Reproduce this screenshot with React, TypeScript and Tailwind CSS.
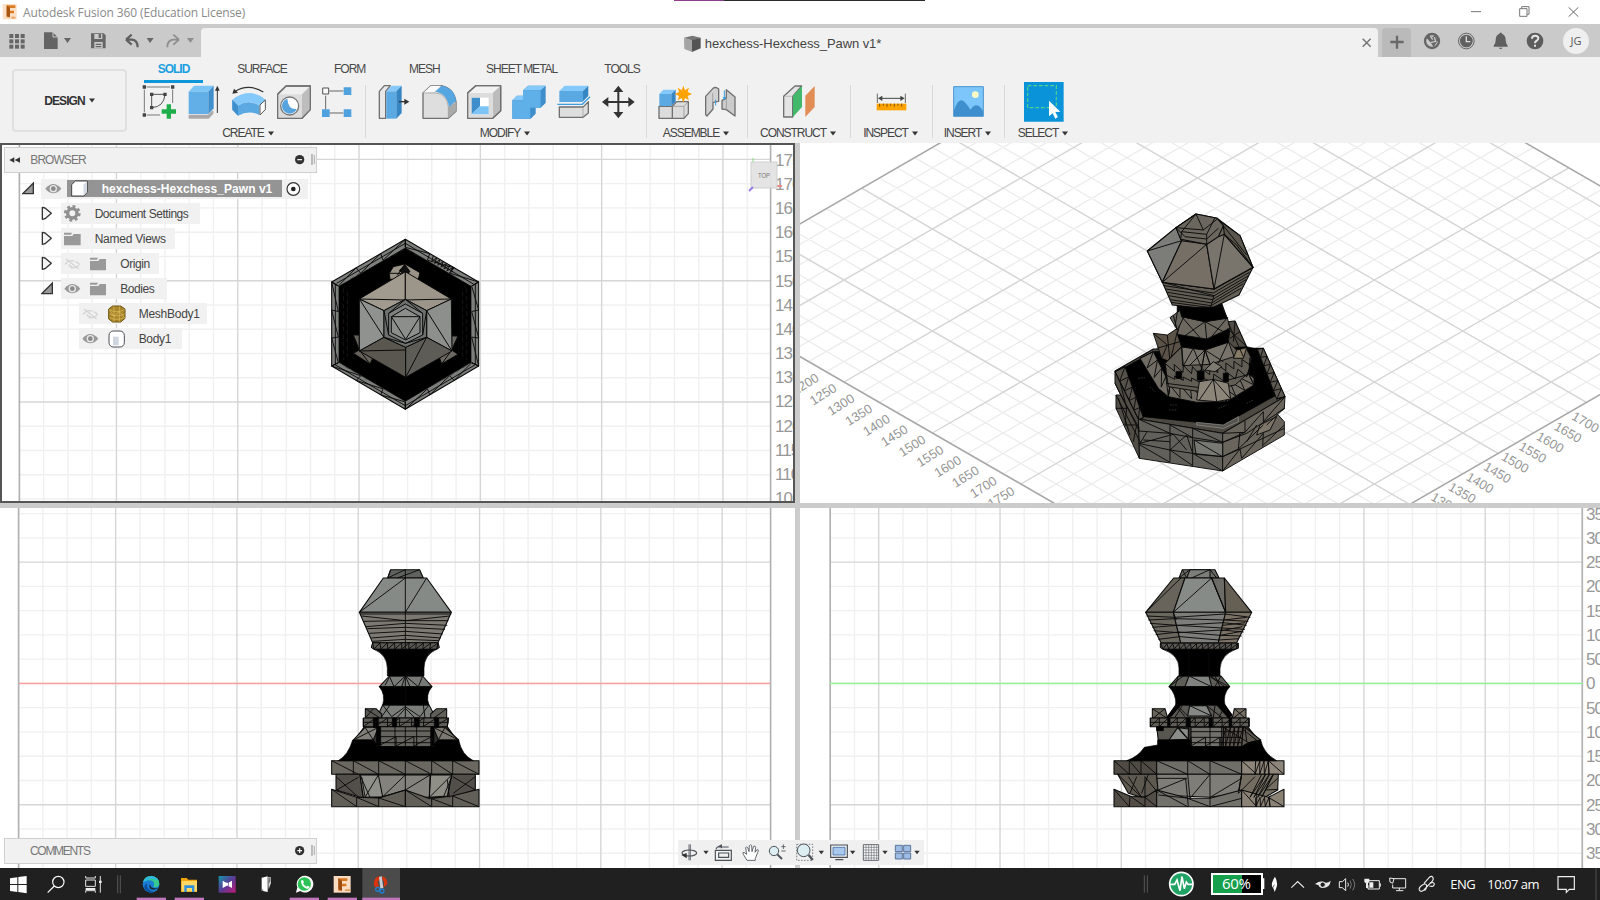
import React from "react";

type Pt = [number, number];
type Face = [string, string];

/* ---------- small helpers ---------- */

function Ico({ x, y, w, h, children, className = "" }: { x: number; y: number; w: number; h: number; children: React.ReactNode; className?: string }) {
  return (
    <svg viewBox={`${x} ${y} ${w} ${h}`} width={w / 3} height={h / 3} className={`block shrink-0 ${className}`} fill="none">
      {children}
    </svg>
  );
}

function zig(a: Pt, b: Pt, c: Pt, d: Pt, n: number): string {
  let s = "";
  for (let i = 0; i <= n; i++) {
    const t = i / n;
    const p = [a[0] + (b[0] - a[0]) * t, a[1] + (b[1] - a[1]) * t];
    const q = [c[0] + (d[0] - c[0]) * t, c[1] + (d[1] - c[1]) * t];
    const u = Math.min(1, (i + 1) / n);
    const r = [a[0] + (b[0] - a[0]) * u, a[1] + (b[1] - a[1]) * u];
    s += `M${p[0]} ${p[1]}L${q[0]} ${q[1]}L${r[0]} ${r[1]}`;
  }
  return s;
}

function Mesh({ x, y, faces, lines, black, top }: { x: number; y: number; faces: Face[]; lines: string; black: string; top?: React.ReactNode }) {
  return (
    <g transform={`translate(${x} ${y}) scale(.33333)`} strokeLinejoin="round">
      {faces.map(([f, p], i) => (
        <polygon key={i} points={p} fill={f} stroke="#0a0a0a" strokeWidth="3.2" />
      ))}
      <path d={black} fill="#000" stroke="#000" strokeWidth="2" />
      <path d={lines} fill="none" stroke="#0a0a0a" strokeWidth="2.8" />
      {top}
    </g>
  );
}

function range(a: number, b: number, step: number) {
  const out: number[] = [];
  for (let v = a; v <= b + 0.01; v += step) out.push(v);
  return out;
}

/* ---------- models ---------- */

const outerHex: Pt[] = [[286, 58], [506, 186], [506, 438], [286, 568], [65, 438], [65, 186]];
const innerHex: Pt[] = [[286, 82], [485, 198], [485, 428], [286, 546], [85, 428], [85, 198]];

function PawnTop() {
  const rim = outerHex.map((p, i) => zig(p, outerHex[(i + 1) % 6], innerHex[i], innerHex[(i + 1) % 6], 3)).join("");
  return (
    <Mesh
      x={310}
      y={220}
      faces={[["#7d7f7c", outerHex.map((p) => p.join(",")).join(" ")]]}
      black="M286 84L483 199V427L286 544L87 427V199Z"
      lines={rim + zig([370, 107], [430, 142], [365, 125], [420, 158], 6) + "M76 192V434M496 192V434M286 70L80 190M286 70L490 192M286 557L75 434M286 557L496 434"}
      top={
        <g stroke="#0a0a0a" strokeWidth="3">
          <g stroke="#2b2b2b" strokeWidth="1.5" strokeDasharray="14 9">
            <path d="M100 205V420M112 215V410M470 205V420M458 215V410M230 118L286 88L345 118M120 178L180 140M400 142L460 176M105 440L170 478M400 480L470 436" fill="none" />
          </g>
          <path d="M238 160L250 140L285 132L330 158L325 178H240Z" fill="#9a9488" />
          <path d="M268 152L285 134L300 155L286 165Z" fill="#111" />
          <path d="M285 132L262 166M238 160H285" />
          <path d="M130 345H148V390L188 415L180 432L130 400Z" fill="#65625b" />
          <path d="M130 345L148 390L130 400M148 390L180 432" />
          <path d="M444 348H425V390L388 412L395 432L444 403Z" fill="#6c6962" />
          <path d="M444 348L425 390L444 403M425 390L395 432" />
          <path d="M148 237L286 155V238L222 272Z" fill="#a09a8f" />
          <path d="M424 237L286 155V238L350 272Z" fill="#9b958a" />
          <path d="M148 237L222 272V352L148 393Z" fill="#8f928e" />
          <path d="M424 237L350 272V352L426 393Z" fill="#8c8f8c" />
          <path d="M148 393L222 352L287 382V472Z" fill="#5a5750" />
          <path d="M426 393L350 352L287 382V472Z" fill="#5e5c57" />
          <path d="M148 237L286 240L424 237M148 237L222 352M350 272L426 393M148 393L287 390M350 352L287 472" fill="none" />
          <path d="M286 238L350 272V352L287 382L222 352V272Z" fill="#6d706d" />
          <path d="M286 252L338 280V345L287 370L236 345V280Z" fill="#7f8280" />
          <path d="M286 265L330 290V338L287 360L244 338V290Z" fill="#8b8e8b" />
          <path d="M244 290H330L287 358ZM222 272L236 345M350 272L338 345M286 238L236 280M286 238L338 280M222 352L287 370L350 352" fill="none" />
        </g>
      }
    />
  );
}

function PawnFront() {
  return (
    <Mesh
      x={310}
      y={560}
      faces={[
        ["#2c2b28", "170,490 405,490 440,540 400,600 170,600 135,540"],
        ["#5f625f", "242,29 329,29 340,54 233,54"],
        ["#868a86", "220,54 350,54 424,157 148,157"],
        ["#7b7971", "148,157 424,157 384,248 188,248"],
        ["#5a5954", "188,248 384,248 388,262 380,268 192,268 184,262"],
        ["#777976", "238,348 338,348 366,380 208,380"],
        ["#7b7d79", "218,435 357,435 378,474 200,474"],
        ["#5b5953", "166,446 198,446 215,462 215,474 166,474"],
        ["#615f59", "410,446 380,446 362,462 362,474 410,474"],
        ["#5d5c56", "160,474 415,474 412,500 160,500"],
        ["#65645e", "205,500 365,500 365,560 205,560"],
        ["#817f79", "165,502 205,502 190,540 130,540"],
        ["#79776f", "370,502 405,502 446,540 385,540"],
        ["#6a6861", "65,602 507,602 507,643 65,643"],
        ["#524f4a", "78,643 496,643 496,690 425,712 152,712 78,690"],
        ["#83827c", "150,645 425,645 412,712 160,712"],
        ["#625f58", "65,688 140,712 205,714 286,690 360,716 425,708 507,688 507,740 65,740"],
        ["#8f908a", "205,645 218,710 160,712 150,645"],
        ["#8f8e87", "362,645 425,645 412,708 358,712"],
      ]}
      black={
        "M192 268Q232 285 232 325V348H342V325Q342 285 380 268Z" +
        "M208 380H366Q345 405 357 435H218Q228 405 208 380Z" +
        "M128 540Q115 585 85 602H490Q455 585 446 540H385L365 560H205L190 540Z" +
        "M190 474H205V502H190ZM247 474H260V500H247ZM313 474H328V500H313ZM373 474H386V502H373ZM200 502L212 500V560H200ZM362 500H372V560H362Z"
      }
      lines={
        "M286 29V270M242 29L233 54M233 54L286 29M262 54L329 29M148 157L286 54M350 54L286 157" +
        "M155 168L286 182L420 168M160 184L286 182L415 182M168 200L286 190L412 196M172 206L286 202L405 208M178 220L286 214L398 222M184 234L286 226L392 234M188 244L286 238L386 242M150 162H424" +
        zig([188, 249], [384, 249], [192, 267], [380, 267], 9) +
        "M238 348L252 380L286 348L275 380M286 348L325 380L338 348M286 348L300 380M286 348V435M238 352L225 376M218 435L245 470L286 440L330 470L357 435M286 435V474M240 435L215 470M286 445L260 474M286 445L315 474M340 435L345 474" +
        "M166 446L210 474M166 474L190 446M410 446L372 474M160 487H415" +
        zig([160, 474], [415, 474], [160, 500], [412, 500], 7) +
        "M205 513H365M205 530H365M205 548H365M255 500V560M320 500V560M286 500V560" +
        zig([205, 530], [365, 530], [205, 558], [365, 558], 3) +
        "M165 502L190 540M205 502L130 540M405 502L385 540M370 502L446 540" +
        "M130 602V643M206 602V643M286 602V643M365 602V643M428 602V643M65 602L145 643M130 602L206 643M206 602L286 643M286 602L365 643M365 602L428 643M428 602L507 643" +
        "M78 650L145 712M145 652L80 690M150 645L180 712M218 710L286 645M205 645L165 712M286 645V740M286 690L360 645L358 712L425 645M425 650L400 712M428 650L496 690M496 650L430 700M412 660L418 712M155 650L165 710" +
        "M65 688L140 740V712M140 712L206 740V714M206 714L286 740M286 690L365 740V716M365 716L428 740V708M428 708L507 740M286 740L286 690M206 714L286 690"
      }
    />
  );
}

function PawnRight() {
  return (
    <Mesh
      x={1095}
      y={560}
      faces={[
        ["#33312e", "190,490 450,490 490,540 450,600 190,600"],
        ["#6b6b66", "262,29 360,29 372,54 252,54"],
        ["#7c7e7a", "285,29 345,29 345,54 275,54"],
        ["#69645b", "236,54 270,54 235,157 152,157"],
        ["#878b87", "270,54 350,54 392,157 235,157"],
        ["#6e6c66", "350,54 388,54 392,157"],
        ["#655f54", "388,54 470,157 392,157"],
        ["#6a675f", "152,157 235,157 257,248 198,248"],
        ["#7d7e79", "235,157 392,157 370,248 257,248"],
        ["#7b7266", "392,157 470,157 425,248 370,248"],
        ["#5a5852", "196,250 430,250 430,264 422,268 204,268 196,262"],
        ["#5e5d58", "250,348 378,348 404,380 222,380"],
        ["#80837f", "282,348 342,348 350,380 270,380"],
        ["#5b5953", "242,435 390,435 415,474 215,474"],
        ["#858884", "284,437 335,437 350,468 278,468"],
        ["#68655d", "172,446 210,446 218,474 172,474"],
        ["#746e64", "418,446 453,446 453,474 412,474"],
        ["#5f5d56", "166,474 462,474 462,500 166,500"],
        ["#57564f", "185,502 280,502 280,540 190,540"],
        ["#8a8d89", "248,503 280,538 222,540"],
        ["#8a8d89", "250,503 280,507 280,538"],
        ["#71706a", "288,502 385,502 385,560 288,560"],
        ["#5d5850", "385,502 450,502 497,540 460,548 440,560 385,560"],
        ["#4f4b44", "57,602 185,602 185,643 57,643"],
        ["#706e68", "185,602 440,602 440,643 185,643"],
        ["#8f867b", "440,602 567,602 567,643 440,643"],
        ["#5d5951", "68,643 185,643 190,700 140,712 100,700"],
        ["#7e7d77", "185,643 440,643 430,700 345,712 190,705"],
        ["#746d62", "440,643 550,643 548,690 510,712 430,705"],
        ["#524e47", "57,688 105,708 150,712 185,690 185,740 57,740"],
        ["#73716b", "185,690 280,715 345,715 440,690 440,740 185,740"],
        ["#8b8276", "440,690 520,712 567,688 567,740 440,740"],
      ]}
      black={
        "M204 268Q252 285 252 325V348H375V325Q378 285 422 268Z" +
        "M222 380H404Q382 405 390 435H242Q245 405 222 380Z" +
        "M188 540V555L148 562Q130 590 95 602H545Q505 580 497 540L470 545L440 560H288V540Z" +
        "M185 500H205V512H185ZM218 474H225V500H218ZM274 474H286V500H274ZM342 474H352V500H342ZM402 474H410V500H402ZM245 435L215 472L228 470L258 435ZM365 435L400 474L412 465L390 435Z"
      }
      lines={
        "M262 29L275 54M285 29L252 54M345 29L290 54M345 29L365 54M152 157L258 54M235 157L350 54M350 54L392 157" +
        "M155 168L240 172L390 162L466 172M160 180L242 176L388 180L460 184M165 190L245 196L385 188L455 196M172 202L247 196L380 204L450 208M176 212L250 218L378 210L446 216M182 224L252 216L376 226L440 228M190 238L255 230L372 240L432 236M236 160L244 180" +
        "M388 180L455 172M383 196L450 188M380 212L442 200M376 226L440 214" +
        zig([198, 251], [428, 251], [204, 267], [424, 267], 13) +
        "M282 268V348M342 268V348M250 348L240 380M265 348L225 378M282 348L350 380M342 348L390 380M360 348L375 380M378 348L360 380M348 350L398 378" +
        "M284 437L350 468M242 437L270 470M262 437L240 472M278 468L250 440M335 437L380 472M360 437L355 472M390 437L372 472M172 446L215 474M210 446L175 474M453 446L415 474M418 446L450 474M166 487H462" +
        zig([166, 474], [462, 474], [166, 500], [462, 500], 11) +
        "M288 515H440M288 532H440M288 548H440M345 500V560" +
        zig([288, 532], [375, 532], [288, 558], [375, 558], 2) +
        zig([380, 500], [445, 500], [380, 558], [440, 558], 5) +
        "M385 502L460 548M450 502L455 545M440 505L490 545" +
        "M103 602V643M138 602V643M278 602V643M345 602V643M57 602L103 643M103 602L138 643M138 602L185 643M185 602L278 643M278 602L345 643M345 602L440 643M440 602L485 643M520 602L567 643" +
        zig([482, 602], [520, 602], [480, 643], [522, 643], 3) +
        zig([500, 643], [535, 643], [465, 712], [500, 712], 3) +
        "M68 643L140 712L100 650M125 650L105 700M150 650V740M150 650L190 700M185 655H275L190 690M278 643L285 715L345 643V740M345 712L440 655M440 643L430 700L480 650M548 655L510 690L550 688M272 655L280 740M160 643L140 700M190 705L285 715" +
        "M57 688L103 740L105 708M105 708L150 740M150 712L185 740M185 690L278 740M278 715L345 740L440 715M440 690L485 740M485 700V740M520 712L567 740" +
        zig([482, 712], [522, 712], [482, 740], [525, 740], 3)
      }
    />
  );
}

function PawnIso() {
  return (
    <Mesh
      x={1090}
      y={195}
      faces={[
        ["#504b44", "412,380 435,378 470,455 460,490 405,440"],
        ["#4c4942", "75,528 190,462 520,460 585,605 398,715 145,672"],
        ["#000000", "262,322 395,325 412,372 345,385 262,370"],
        ["#625e55", "217,262 372,282 489,217 447,300 360,342 247,330"],
        ["#6b665e", "318,57 382,70 450,122 489,217 372,282 217,262 172,168 258,98"],
        ["#7c7d79", "258,98 172,168 217,262 275,137"],
        ["#756f65", "275,137 217,262 372,282 350,148"],
        ["#79756c", "350,148 372,282 489,217 403,118 385,125"],
        ["#5c574f", "382,72 450,122 489,217 403,118 400,92"],
        ["#6b665e", "318,57 382,70 400,92 385,125 350,148 272,133 258,98"],
      ]}
      black="M100 520L190 470L470 455L500 462L560 600L398 690L160 665Z"
      lines={
        "M318 57L258 98L340 105L382 72M318 57L340 105M318 57L275 110L350 118L375 68M258 98L285 125L350 132L385 100M350 118L350 148M275 110L272 133M172 168L275 137M217 262L350 148M403 118L372 282M403 118L440 150L489 217M400 92L470 180" +
        "M222 272L370 294L478 232M227 282L369 304L474 243M232 292L367 314L468 254M236 302L365 324L460 266M240 314L363 332L453 280M217 262L372 302L360 342M243 322L362 338"
      }
      top={
        <g stroke="#0a0a0a" strokeWidth="2.8" strokeLinejoin="round">
          <path d="M150 490L190 470L240 570L330 580L390 570L475 535L492 550V570L410 620L320 622L235 605L205 580Z" fill="#706c63" />
          <path d={zig([150, 490], [235, 605], [190, 470], [240, 570], 4) + zig([235, 605], [410, 620], [240, 570], [390, 570], 5) + zig([410, 620], [492, 570], [390, 570], [475, 535], 3)} fill="none" />
          <path d="M190 415L232 420L262 400L275 455L240 500L215 490Z" fill="#5a5247" />
          <path d="M190 415L232 450L215 490M232 420L240 500L262 410M200 460L270 440" fill="none" />
          <path d="M225 505L275 455L345 465L415 440L440 465L470 462L484 490L480 530L435 570L330 590L235 575Z" fill="#625e56" />
          <path d="M275 455L345 465L360 508L278 512Z M415 440L345 465L360 508L432 485Z" fill="#77736a" />
          <path d="M440 465L470 458L460 490L430 490Z" fill="#857a66" />
          <path
            d={
              zig([225, 505], [335, 520], [275, 455], [345, 465], 2) +
              zig([228, 525], [330, 540], [225, 505], [335, 518], 4) +
              zig([230, 550], [330, 562], [228, 540], [330, 552], 4) +
              zig([335, 545], [480, 510], [335, 520], [480, 488], 6) +
              zig([335, 572], [470, 545], [335, 545], [480, 515], 4) +
              "M228 565L330 578L470 540M345 465L300 510M345 465L400 500M415 440L385 505"
            }
            fill="none"
          />
          <path d="M258 530H275V550H258ZM322 528H342V555H322ZM400 535H415V560H400ZM478 505H492V540H478Z" fill="#000" />
          <path d="M262 418L350 432L420 400L415 442L345 465L275 456Z" fill="#000" />
          <path d="M275 365L345 380L412 368L420 400L350 432L262 418Z" fill="#6c6860" />
          <path d="M240 368L272 345L282 365L262 405Z" fill="#66635c" />
          <path d="M345 380L350 432M275 365L330 428M345 380L285 422M345 380L400 410M412 368L365 425M250 362L262 405M262 350L255 395" fill="none" />
          <path d="M268 340L395 335L412 370L345 380L275 365Z" fill="#000" />
          <path d="M415 385L460 485M435 378L430 440M412 400L470 455M420 430L450 410" fill="none" />
          <path d="M328 560L370 553L415 565L422 612L380 620L320 615Z" fill="#8c857a" />
          <path d="M370 553L328 615M370 553L380 620M370 553L420 610" fill="none" />
          <path d="M345 525L370 500L395 515L375 530Z" fill="#7c7970" />
          <path d="M502 462L520 460L585 605L560 612Z" fill="#5d5952" />
          <path d={zig([502, 462], [560, 612], [520, 460], [585, 605], 6)} fill="none" />
          <path d="M75 530L105 515L160 668L145 675Z" fill="#56524b" />
          <path d={zig([75, 530], [145, 675], [105, 515], [160, 668], 5)} fill="none" />
          <path d="M145 672L398 715V828L148 790Z" fill="#62605a" />
          <path d="M398 715L585 605L583 640L560 655L583 680V720L398 828Z" fill="#6a655c" />
          <path d="M75 530L145 672L148 790L78 640V600L92 600L75 565Z" fill="#504d46" />
          <path d="M312 735L398 745V785L318 778Z" fill="#777872" />
          <path d="M510 690L560 665L540 705L500 720Z" fill="#7f766a" />
          <path
            d="M145 708L240 715L308 728L398 742L470 715L585 640M145 745L240 765L308 775L398 785L450 762L583 700M240 690V800M308 700V812M145 672L240 715M240 690L308 728M308 700L398 742M170 712L150 745L250 718L290 765M240 765L290 720L308 775M150 750L240 802M240 765L308 812M308 775L398 828M312 735L398 785M160 735L240 740M398 715L465 712L398 742M465 678V712L520 650V680L585 605M450 712L445 762L398 785M445 762L520 690M398 828L450 762L455 790M455 790L520 715L518 755M520 750L583 690M583 640L530 690M470 740L500 690M75 530L145 672M75 565L148 708M78 600L150 740M92 600L148 700M78 640L110 640L105 690L140 690L130 740M90 560L110 640M85 610L120 720"
            fill="none"
          />
          <path d="M320 682L400 690L445 665V680L400 700L320 690Z" fill="#55534e" stroke="#aaa" strokeWidth="1.6" />
          <path d="M145 550L165 548M240 630H260M238 645H262M385 640L410 630M470 625L490 615M180 575L195 590" stroke="#555" strokeWidth="1.8" strokeDasharray="5 3" />
        </g>
      }
    />
  );
}

/* ---------- viewports ---------- */

const STEP = 24.26;

function OrthoGrid({ x0, x1, majorX, y0, y1, majorY }: { x0: number; x1: number; majorX: number; y0: number; y1: number; majorY: number }) {
  const vx = range(x0, x1, STEP);
  const first = majorY - Math.ceil((majorY - y0) / STEP) * STEP;
  const hy = range(first, y1, STEP);
  const isMajor = (v: number, m: number) => Math.abs(((v - m) / (STEP * 5)) - Math.round((v - m) / (STEP * 5))) < 0.05;
  return (
    <g strokeWidth="1.4">
      {vx.map((v) => !isMajor(v, majorX) && <path key={v} d={`M${v} ${y0}V${y1}`} stroke="#f0f0f0" />)}
      {hy.map((v) => !isMajor(v, majorY) && <path key={v} d={`M${x0} ${v}H${x1}`} stroke="#f0f0f0" />)}
      {vx.map((v) => isMajor(v, majorX) && <path key={v} d={`M${v} ${y0}V${y1}`} stroke="#d6d6d6" />)}
      {hy.map((v) => isMajor(v, majorY) && <path key={v} d={`M${x0} ${v}H${x1}`} stroke="#d6d6d6" />)}
      <path d={`M${x0} ${y0}V${y1}M${x1} ${y0}V${y1}`} stroke="#b0b0b0" strokeWidth="1.6" />
    </g>
  );
}

function AxisText({ x, y, children }: { x: number; y: number; children: React.ReactNode }) {
  return (
    <text x={x} y={y + 6} fontSize="17" fill="#989898" letterSpacing="-1" fontFamily="Liberation Sans, sans-serif">
      {children}
    </text>
  );
}

function TopView() {
  const labels = range(0, 14, 1);
  return (
    <svg viewBox="0 143 795 360" width="795" height="360" className="block">
      <OrthoGrid x0={19.4} x1={770.6} majorX={116.3} y0={143} y1={503} majorY={280.7} />
      {labels.map((i) => (
        <AxisText key={i} x={775} y={159.6 + i * 24.18}>
          {1750 - i * 50}
        </AxisText>
      ))}
      <PawnTop />
      <path d="M753 158V165" stroke="#7be07b" />
      <path d="M776 186h6" stroke="#e88" strokeWidth="2" />
      <rect x="751" y="162" width="26" height="26" fill="#e3e3e3" stroke="#cfcfcf" fillOpacity=".95" />
      <text x="758" y="178" fontSize="8" fill="#777" textLength="12" lengthAdjust="spacingAndGlyphs" fontFamily="Liberation Sans, sans-serif">TOP</text>
      <path d="M749 191l4-4" stroke="#9a7bea" strokeWidth="2" />
      <rect x="1" y="144" width="793" height="358" fill="none" stroke="#555" strokeWidth="2" />
    </svg>
  );
}

function IsoView() {
  const k = 0.577;
  const A0 = -737.4;
  const A1 = A0 + 20.4 * 31;
  const B0 = 685.4;
  const B1 = B0 + 20.4 * 31;
  const at = (a: number, b: number) => `${(b - a) / (2 * k)} ${(a + b) / 2}`;
  const minor: string[] = [];
  const major: string[] = [];
  for (let i = 0; i <= 31; i++) {
    const a = A0 + 20.4 * i;
    const b = B0 + 20.4 * i;
    (i % 5 === 1 ? major : minor).push(`M${at(a, B0)}L${at(a, B1)}`);
    (i % 5 === 4 ? major : minor).push(`M${at(A0, b)}L${at(A1, b)}`);
  }
  return (
    <svg viewBox="800 143 800 360" width="800" height="360" className="block">
      <path d={minor.join("")} stroke="#ececec" strokeWidth="1.3" />
      <path d={major.join("")} stroke="#d4d4d4" strokeWidth="1.4" />
      <path d={`M${at(A0, B0)}L${at(A0, B1)}L${at(A1, B1)}L${at(A1, B0)}Z`} fill="none" stroke="#a8a8a8" strokeWidth="1.5" />
      <g fontSize="13" fill="#969696" fontFamily="Liberation Sans, sans-serif" textAnchor="middle">
        {range(0, 11, 1).map((i) => (
          <text key={i} transform={`translate(${805 + i * 17.8} ${383.5 + i * 10.3}) rotate(-32)`} y="5">
            {1200 + i * 50}
          </text>
        ))}
        {range(0, 8, 1).map((i) => (
          <text key={i} transform={`translate(${1445 + i * 17.6} ${502.5 - i * 10.1}) rotate(30)`} y="5">
            {1300 + i * 50}
          </text>
        ))}
      </g>
      <PawnIso />
    </svg>
  );
}

function FrontView() {
  return (
    <svg viewBox="0 508 795 360" width="795" height="360" className="block">
      <OrthoGrid x0={18.6} x1={770.6} majorX={115.8} y0={508} y1={868} majorY={683.4} />
      <path d="M19 683.5H770" stroke="#f8a0a0" strokeWidth="1.4" />
      <PawnFront />
    </svg>
  );
}

function RightView() {
  const labels = ["350", "300", "250", "200", "150", "100", "50", "0", "50", "100", "150", "200", "250", "300", "350"];
  return (
    <svg viewBox="800 508 800 360" width="800" height="360" className="block">
      <OrthoGrid x0={830.2} x1={1582.3} majorX={1121.4} y0={508} y1={868} majorY={683.4} />
      <path d="M830 683.5H1583" stroke="#93f293" strokeWidth="1.4" />
      {labels.map((t, i) => (
        <AxisText key={i} x={1586} y={683.4 + (i - 7) * 24.26}>
          {t}
        </AxisText>
      ))}
      <PawnRight />
    </svg>
  );
}

/* ---------- ribbon ---------- */

const tri = "M0 0H16L8 11Z";

function Section({ label, width, pad = "", children }: { label: string; width: string; pad?: string; children: React.ReactNode }) {
  return (
    <div className={`flex h-[61px] shrink-0 flex-col items-center ${width}`}>
      <div className={`flex h-10 items-center justify-center ${pad}`}>{children}</div>
      <div className="flex items-center gap-[4px] pt-[3px] pr-[2px] text-[12px] leading-[16px] tracking-[-1.05px] text-[#444]">
        <span>{label}</span>
        <svg viewBox="0 0 16 11" width="6" height="5">
          <path d={tri} fill="#333" />
        </svg>
      </div>
    </div>
  );
}

function Sep() {
  return <div className="mt-[3px] h-[53px] w-px shrink-0 bg-[#d8d8d8]" />;
}

const g = { stroke: "#707070", strokeWidth: 4, strokeLinejoin: "round" as const };

function Ribbon() {
  const tabs: [string, string][] = [
    ["SURFACE", "w-[50px] ml-[34px]"],
    ["FORM", "w-[30px] ml-[47px]"],
    ["MESH", "w-[30px] ml-[45px]"],
    ["SHEET METAL", "w-[70px] ml-[47px]"],
    ["TOOLS", "w-[36px] ml-[48px]"],
  ];
  return (
    <div className="flex h-[86px] shrink-0 bg-[#f1f1f1]">
      <div className="ml-3 mt-3 flex h-[63px] w-[115px] items-center justify-center gap-[4px] rounded-[4px] border-2 border-[#e0e0e0] text-[12px] font-bold tracking-[-0.95px] text-[#333]">
        <span>DESIGN</span>
        <svg viewBox="0 0 16 11" width="6" height="5">
          <path d={tri} fill="#333" />
        </svg>
      </div>
      <div className="ml-[6px] flex flex-col">
        <div className="flex h-[25px] text-[12px] leading-6 tracking-[-1px] whitespace-nowrap text-[#4a4a4a]">
          <div className="ml-[11px] h-[26px] w-[59px] border-b-[3px] border-[#0f96d8] text-center font-bold text-[#1b9fe0]">SOLID</div>
          <div className="flex">
            {tabs.map(([t, c]) => (
              <div key={t} className={`text-center ${c}`}>
                {t}
              </div>
            ))}
          </div>
        </div>
        <div className="flex">
          <Section label="CREATE" width="w-[232px]" pad="pl-[3px]">
            <Ico x={414} y={247} w={135} h={119}>
              <path d="M440 262H510M433 270V338M440 346H480M518 270V310" stroke="#777" strokeWidth="3" />
              <path d="M455 284H495Q492 322 455 324Z" stroke="#555" strokeWidth="3" />
              <path d="M428 257h10v10h-10zM513 257h10v10h-10zM428 341h10v10h-10zM450 279h10v10h-10zM490 279h10v10h-10zM450 319h10v10h-10z" fill="#444" />
              <path d="M500 314h13v15h15v13h-15v15h-13v-15h-15v-13h15z" fill="#1fae4b" />
            </Ico>
            <Ico x={549} y={247} w={135} h={119}>
              <path d="M566 345L624 345L640 330V342L626 357H566Z" fill="#a9a9a9" />
              <path d="M566 276L582 258H641L625 276Z" fill="#7dc4f7" />
              <path d="M566 276H625V343H566Z" fill="#62aee6" />
              <path d="M625 276L641 258V326L625 343Z" fill="#3f8fcd" />
              <path d="M652 270V340" stroke="#333" strokeWidth="3" />
              <path d="M652 258L659 273H645Z" fill="#333" />
            </Ico>
            <Ico x={684} y={247} w={135} h={119}>
              <path d="M704 276Q745 250 790 277" stroke="#333" strokeWidth="3.5" />
              <path d="M697 282L702 267L714 279Z" fill="#333" />
              <path d="M697 300Q747 260 797 300L780 318Q747 298 714 318Z" fill="#84c9fa" />
              <path d="M697 300L714 318V348L697 330ZM714 318Q747 298 778 318V346Q747 330 714 348Z" fill="#5ba9e2" />
              <path d="M697 300L714 318V348L697 330Z" fill="#3f8fcd" />
              <path d="M780 316L796 301V330L780 346Z" fill="#fff" stroke="#555" strokeWidth="3" />
            </Ico>
            <Ico x={819} y={247} w={135} h={119}>
              <path d="M833 284L858 259H931V330L906 356H833Z" fill="#efefef" {...g} />
              <path d="M833 284H906V356H833Z" fill="#dcdcdc" stroke="none" />
              <path d="M906 284L931 259V330L906 356Z" fill="#bdbdbd" stroke="none" />
              <path d="M833 284L858 259H931V330L906 356H833Z" {...g} />
              <circle cx="869" cy="319" r="27" fill="#fff" stroke="#777" strokeWidth="4" />
              <path d="M862 297A23 23 0 1 0 890 328Q864 330 862 297Z" fill="#56a3de" />
            </Ico>
            <Ico x={954} y={247} w={135} h={119}>
              <path d="M988 274H1030M977 288V330M988 340H1030" stroke="#666" strokeWidth="3" />
              <path d="M968 265H986V283H968Z" fill="#f8f8f8" stroke="#555" strokeWidth="3" />
              <path d="M1031 263h23v23h-23zM966 329h23v23h-23zM1031 329h23v23h-23z" fill="#4fa2de" />
            </Ico>
          </Section>
          <Sep />
          <Section label="MODIFY" width="w-[280px]" pad="pl-[4px]">
            <Ico x={40} y={97} w={135} h={119}>
              <path d="M59 125L74 108H92L78 125V206H59Z" fill="#e8e8e8" {...g} />
              <path d="M80 125L96 108H126L110 125Z" fill="#84c9fa" />
              <path d="M80 125H110V207H80Z" fill="#5aa9e3" />
              <path d="M110 125L126 108V190L110 207Z" fill="#3786c4" />
              <path d="M118 156H138" stroke="#333" strokeWidth="4" />
              <path d="M134 147L149 156L134 165Z" fill="#333" />
            </Ico>
            <Ico x={175} y={97} w={135} h={119}>
              <path d="M190 130L214 108H245Q285 118 289 158V185L266 206H190Z" fill="#dedede" {...g} />
              <path d="M190 130L214 108H244L226 126Z" fill="#fafafa" />
              <path d="M266 172L289 156V185L266 206Z" fill="#aaa" />
              <path d="M226 126L246 108Q286 116 289 154L268 172Q262 130 226 126Z" fill="#56a6e2" />
              <path d="M190 130H226Q262 132 266 172V206" stroke="#999" strokeWidth="2" />
            </Ico>
            <Ico x={310} y={97} w={135} h={119}>
              <path d="M324 130L348 108H423V183L399 206H324Z" fill="#f2f2f2" {...g} />
              <path d="M399 130L423 108V183L399 206Z" fill="#bcbcbc" />
              <path d="M324 130H399V206H324Z" fill="#dcdcdc" />
              <path d="M324 130L348 108H423V183L399 206H324Z" {...g} />
              <path d="M336 144H387V194H336Z" fill="#fff" />
              <path d="M336 144H361V170L336 194Z" fill="#3d8ecb" />
              <path d="M336 194L361 170H387V194Z" fill="#7cc4f6" />
            </Ico>
            <Ico x={445} y={97} w={135} h={119}>
              <path d="M458 152L472 138H490V122L505 108H558V160L543 174H528V192L513 207H458Z" fill="#3d8ecb" />
              <path d="M458 152L472 138H490V122L505 108H558L543 122H492V152Z" fill="#84c9fa" />
              <path d="M458 152H490V122H543V174H512V207H458Z" fill="#5fafe8" />
            </Ico>
            <Ico x={580} y={97} w={135} h={119}>
              <path d="M599 124L615 108H686L670 124Z" fill="#84c9fa" />
              <path d="M599 124H670V157H599Z" fill="#5aa9e3" />
              <path d="M670 124L686 108V140L670 157Z" fill="#3786c4" />
              <path d="M599 172H670L686 156V190L670 203H599Z" fill="#dedede" {...g} />
              <path d="M670 172V203" stroke="#999" strokeWidth="2" />
              <path d="M593 164H668L691 141" stroke="#f1f1f1" strokeWidth="10" />
              <path d="M593 164H668L691 141" stroke="#3c9de0" strokeWidth="4" />
            </Ico>
            <Ico x={715} y={97} w={135} h={119}>
              <path d="M776 120V194M740 157H812" stroke="#333" strokeWidth="6" />
              <path d="M776 108L791 127H761ZM776 206L791 187H761ZM727 157L746 142V172ZM825 157L806 142V172Z" fill="#333" />
            </Ico>
          </Section>
          <Sep />
          <Section label="ASSEMBLE" width="w-[100px]" pad="pl-[3px]">
            <Ico x={880} y={97} w={135} h={119}>
              <path d="M895 170H935V206H895ZM935 170L948 156H983V192L970 206H935Z" fill="#dcdcdc" {...g} />
              <path d="M935 170H970L983 156M970 170V206" stroke="#888" strokeWidth="2" />
              <path d="M896 133L908 120H945L932 133Z" fill="#84c9fa" />
              <path d="M896 133H932V169H896Z" fill="#5aa9e3" />
              <path d="M932 133L945 120V156L932 169Z" fill="#3786c4" />
              <path d="M968 108L973 122L985 114L981 127L994 133L981 139L985 152L973 145L968 159L963 145L951 152L955 139L942 133L955 127L951 114L963 122Z" fill="#ffa300" />
            </Ico>
            <Ico x={1016} y={97} w={135} h={119}>
              <path d="M1036 195V140L1058 116Q1066 110 1075 118V155L1058 158V178L1040 199Z" fill="#d2d2d2" {...g} />
              <path d="M1085 152L1098 146V120L1124 142V199L1098 180L1085 178Z" fill="#cccccc" {...g} />
              <path d="M1057 130V160M1098 146V180" stroke="#999" strokeWidth="2.5" />
              <path d="M1066 150V168M1092 122V148" stroke="#3c9de0" strokeWidth="3" />
              <path d="M1087 142H1098L1092 152Z" fill="#3c9de0" />
            </Ico>
          </Section>
          <Sep />
          <Section label="CONSTRUCT" width="w-[102px]">
            <Ico x={411} y={247} w={135} h={119}>
              <path d="M431 290L465 259H485L458 290V352H431Z" fill="#e4e4e4" {...g} />
              <path d="M431 290H458" stroke="#aaa" strokeWidth="2" />
              <path d="M459 288L486 259V322L459 352Z" fill="#43b86a" />
              <path d="M496 288L524 259V322L496 352Z" fill="#e38d56" />
            </Ico>
          </Section>
          <Sep />
          <Section label="INSPECT" width="w-[81px]">
            <Ico x={688} y={247} w={135} h={119}>
              <path d="M713 282V310M797 282V310" stroke="#666" strokeWidth="3" />
              <path d="M722 296H788" stroke="#444" strokeWidth="3" />
              <path d="M715 296L728 288V304ZM795 296L782 288V304Z" fill="#444" />
              <path d="M711 312H800V332H711Z" fill="#ffa300" />
              <path d="M720 312v9M731 312v6M742 312v9M753 312v6M764 312v9M775 312v6M786 312v9" stroke="#7a5200" strokeWidth="3" />
            </Ico>
          </Section>
          <Sep />
          <Section label="INSERT" width="w-[71px]">
            <Ico x={917} y={247} w={135} h={119}>
              <path d="M940 261H1029V350H940Z" fill="#7cc6fb" stroke="#4a94cd" strokeWidth="3" />
              <circle cx="1005" cy="285" r="10" fill="#fdf9c4" />
              <path d="M941 332Q952 300 964 302Q974 304 990 330Q1002 315 1010 317Q1018 318 1028 334V349H941Z" fill="#3f8fcf" />
            </Ico>
          </Section>
          <Sep />
          <Section label="SELECT" width="w-[78px]">
            <Ico x={1152} y={247} w={119} h={119}>
              <path d="M1152 247H1271V366H1152Z" fill="#0b93d9" />
              <path d="M1163 258H1249V324H1163Z" stroke="#4fd38b" strokeWidth="3.5" strokeDasharray="11 6" />
              <path d="M1227 303V350L1238 341L1246 357L1254 352L1246 337L1261 336Z" fill="#fff" />
            </Ico>
          </Section>
        </div>
      </div>
    </div>
  );
}

/* ---------- header ---------- */

function Header() {
  return (
    <>
      <div className="flex h-6 shrink-0 items-center bg-white">
        <Ico x={0} y={0} w={69} h={72}>
          <path d="M8 12H50V58H8Z" fill="#fbe0c6" />
          <path d="M20 16H46V24H30V32H42V40H30V52H20Z" fill="#d97b25" />
          <path d="M20 16L30 24V52L20 48Z" fill="#a8550f" />
          <path d="M34 50H46V56H34Z" fill="#e9a465" />
        </Ico>
        <span className="pt-px font-['Open_Sans'] text-[12px] tracking-[-0.12px] text-[#8a8a8a]">Autodesk Fusion 360 (Education License)</span>
        <div className="ml-auto flex">
          <Ico x={360} y={0} w={420} h={72}>
            <path d="M393 35H423" stroke="#777" strokeWidth="3" />
            <path d="M539 26H561V49H539ZM545 26V20H567V43H561" stroke="#777" strokeWidth="3" />
            <path d="M686 22L715 50M715 22L686 50" stroke="#666" strokeWidth="3" />
          </Ico>
        </div>
      </div>
      <div className="flex h-[33px] shrink-0 items-end bg-[#cacaca]">
        <div className="h-[33px] w-[201px]">
          <Ico x={0} y={72} w={603} h={99}>
            {[28, 45, 62].map((x) => [102, 118, 134].map((y) => <rect key={`${x}-${y}`} x={x} y={y} width="12" height="12" fill="#666" />))}
            <path d="M132 97H158L173 112V147H132Z" fill="#646464" />
            <path d="M159 95V111H175" stroke="#cacaca" strokeWidth="3" />
            <path d="M192 114H213L202.500 129ZM440 114H461L450 129Z" fill="#666" />
            <path d="M561 114H582L571 129Z" fill="#8e8e8e" />
            <path d="M273 100H311L317 106V145H273Z" fill="#666" />
            <path d="M283 102H307V117H283ZM283 126H308V145H283Z" fill="#cacaca" />
            <path d="M296 102H303V114H296ZM287 131H304V135H287ZM287 138H304V142H287Z" fill="#666" />
            <path d="M378 119L395 104M378 119L395 134M380 119H396Q413 121 413 142" stroke="#5f5f5f" strokeWidth="6.500" />
            <path d="M537 119L520 104M537 119L520 134M535 119H519Q502 121 502 142" stroke="#8e8e8e" strokeWidth="5.500" />
          </Ico>
        </div>
        <div className="flex h-[29px] w-[1177px] items-center rounded-t-[4px] bg-[#f1f1f1]">
          <div className="flex flex-1 items-center justify-center gap-1 pt-[2px] pl-[3px]">
            <Ico x={127} y={102} w={54} h={54}>
              <path d="M130 110L155 104L180 110L154 119Z" fill="#777" />
              <path d="M130 110L154 118V153L131 144Z" fill="#a5a5a5" />
              <path d="M154 118L180 110V142L154 153Z" fill="#545454" />
            </Ico>
            <span className="text-[13px] leading-4 tracking-[-0.08px] text-[#444]">hexchess-Hexchess_Pawn v1*</span>
          </div>
          <Ico x={60} y={85} w={54} h={87}>
            <path d="M68 117L92 141M92 117L68 141" stroke="#777" strokeWidth="4.500" />
          </Ico>
        </div>
        <div className="ml-1 h-[29px] w-[29px] rounded-t-[4px] bg-[#bababa]">
          <Ico x={127} y={85} w={87} h={87}>
            <path d="M172 108V147M152 127H192" stroke="#6a6a6a" strokeWidth="7" />
          </Ico>
        </div>
        <div className="flex h-[33px] w-[189px]">
          <Ico x={214} y={72} w={447} h={99}>
            <circle cx="277" cy="123" r="21" stroke="#666" strokeWidth="7" />
            <path d="M259 112L272 127L282 141L290 128L300 117L290 114V101L279 112L268 106Z" fill="#666" />
            <path d="M272 108L279 119M284 112L288 124L272 128" stroke="#cacaca" strokeWidth="4" />
            <circle cx="380" cy="123" r="23.500" stroke="#666" strokeWidth="3" />
            <circle cx="380" cy="123" r="19" fill="#606060" />
            <path d="M380 109V125H392" stroke="#ddd" strokeWidth="4" />
            <path d="M479 101Q483 94 487 101Q498 105 498 120Q498 132 504 137V140H462V137Q468 132 468 120Q468 105 479 101ZM477 143H489Q483 151 477 143Z" fill="#5f5f5f" />
            <circle cx="586" cy="123" r="25" fill="#5c5c5c" />
            <path d="M577 116Q577 107 586 107Q596 107 596 115Q596 120 590 123Q586 125 586 130M586 134V140" stroke="#e4e4e4" strokeWidth="6" />
          </Ico>
          <div className="mt-1 ml-[3px] flex size-[26px] items-center justify-center rounded-full bg-[#efefef] font-['Open_Sans'] text-[11px] text-[#555]">JG</div>
        </div>
      </div>
    </>
  );
}

/* ---------- browser tree ---------- */

function Eye({ off }: { off?: boolean }) {
  return (
    <Ico x={0} y={0} w={50} h={40}>
      {off ? (
        <path d="M3 22Q15 8 30 12M20 32Q38 34 47 22M6 6L44 36M14 22Q18 30 26 30M34 14Q42 16 46 22" stroke="#d4d4d4" strokeWidth="4" />
      ) : (
        <>
          <path d="M1 20Q25 -8 49 20Q25 48 1 20Z" fill="#999" />
          <circle cx="25" cy="20" r="11" fill="#e8e8e8" />
          <circle cx="25" cy="20" r="7" fill="#8a8a8a" />
        </>
      )}
    </Ico>
  );
}

function Folder() {
  return (
    <Ico x={0} y={0} w={50} h={42}>
      <path d="M0 12H25L29 6H50V40H0ZM0 2H24L21 8H0Z" fill="#999" />
    </Ico>
  );
}

function Arrow({ open }: { open?: boolean }) {
  return (
    <Ico x={2} y={0} w={39} h={45}>
      {open ? <path d="M4 38L36 6V38Z" fill="#999" stroke="#333" strokeWidth="4" /> : <path d="M6 4V40L14 38L33 22L14 6Z" fill="#f4f4f4" stroke="#333" strokeWidth="4" strokeLinejoin="round" />}
    </Ico>
  );
}

function Row({ indent, arrow, width, children }: { indent: string; arrow?: React.ReactNode; width: string; children: React.ReactNode }) {
  return (
    <div className={`flex h-[25px] items-center ${indent}`}>
      <div className="w-[20px] shrink-0">{arrow}</div>
      <div className={`flex h-[21px] items-center bg-[#f1f1f1] pl-[3px] ${width}`}>{children}</div>
    </div>
  );
}

function Browser() {
  return (
    <div className="absolute top-[4px] left-[4px] w-[313px] text-[12px] tracking-[-0.45px] text-[#444]">
      <div className="flex h-[26px] items-center border border-[#d0d0d0] bg-[#f1f1f1]">
        <Ico x={0} y={0} w={40} h={24} className="ml-[3px]">
          <path d="M4 12L19 4V20ZM20 12L36 4V20Z" fill="#333" />
        </Ico>
        <span className="ml-[9px] tracking-[-0.95px] text-[#777]">BROWSER</span>
        <PanelEnd />
      </div>
      <div className="pt-[3px]">
        <div className="flex h-[25px] items-center">
          <div className="ml-[18px] w-[19px]"><Arrow open /></div>
          <div className="flex h-[20px] w-[267px] items-center bg-[#f1f1f1] pl-[4px]">
            <Eye />
            <div className="ml-[5px] flex h-[17px] w-[215px] items-center bg-[#949494]">
              <Ico x={0} y={0} w={60} h={51} className="ml-[3px]">
                <path d="M5 14L16 3H52V36L42 48H5Z" fill="#fff" stroke="#444" strokeWidth="3" strokeLinejoin="round" />
                <path d="M40 14L51 4V36L41 46Z" fill="#d5dbe2" />
              </Ico>
              <span className="ml-[12px] text-[12px] font-bold tracking-[0.05px] text-white">hexchess-Hexchess_Pawn v1</span>
            </div>
            <Ico x={0} y={0} w={48} h={48} className="ml-[3px]">
              <circle cx="25" cy="24" r="19" stroke="#333" strokeWidth="3.500" fill="#fff" />
              <circle cx="25" cy="24" r="7" fill="#222" />
            </Ico>
          </div>
        </div>
        <Row indent="ml-[37px]" arrow={<Arrow />} width="w-[139px]">
          <Ico x={0} y={0} w={50} h={50}>
            <circle cx="25" cy="25" r="14" stroke="#909090" strokeWidth="10" />
            <circle cx="25" cy="25" r="21" stroke="#909090" strokeWidth="8" strokeDasharray="8.500 8" />
          </Ico>
          <span className="ml-[14px]">Document Settings</span>
        </Row>
        <Row indent="ml-[37px]" arrow={<Arrow />} width="w-[114px]">
          <Folder />
          <span className="ml-[14px] tracking-[-0.25px]">Named Views</span>
        </Row>
        <Row indent="ml-[37px]" arrow={<Arrow />} width="w-[98px]">
          <Eye off />
          <div className="ml-[9px]"><Folder /></div>
          <span className="ml-[14px]">Origin</span>
        </Row>
        <Row indent="ml-[37px]" arrow={<Arrow open />} width="w-[106px]">
          <Eye />
          <div className="ml-[9px]"><Folder /></div>
          <span className="ml-[14px]">Bodies</span>
        </Row>
        <Row indent="ml-[55px]" width="w-[128px]">
          <Eye off />
          <Ico x={0} y={0} w={54} h={54} className="ml-[9px]">
            <path d="M2 12L14 3H38L51 12V40L38 51H14L2 42Z" fill="#a8852a" stroke="#6b5210" strokeWidth="3" />
            <path d="M4 14Q26 26 50 14M4 27Q26 38 50 27M4 38Q26 48 50 38M18 4V50M34 4V50M4 14L18 34L34 20L50 38" stroke="#e0c060" strokeWidth="2" />
          </Ico>
          <span className="ml-[13px] tracking-[-0.25px]">MeshBody1</span>
        </Row>
        <Row indent="ml-[55px]" width="w-[103px]">
          <Eye />
          <Ico x={0} y={0} w={54} h={54} className="ml-[9px]">
            <rect x="3" y="3" width="46" height="48" rx="13" fill="#fff" stroke="#4a4f55" strokeWidth="3" />
            <path d="M15 20H32V46H15Z" fill="#cfd6df" />
          </Ico>
          <span className="ml-[13px] tracking-[-0.3px]">Body1</span>
        </Row>
      </div>
    </div>
  );
}

function PanelEnd({ plus }: { plus?: boolean }) {
  return (
    <Ico x={879} y={40} w={70} h={40} className="ml-auto">
      <circle cx="899" cy="60" r="14" fill="#333" />
      <path d={plus ? "M892 60H906M899 53V67" : "M892 60H906"} stroke="#fff" strokeWidth="3.500" />
      <path d="M936 43V76" stroke="#888" strokeWidth="3" />
      <path d="M943 46V73" stroke="#aaa" strokeWidth="3" />
    </Ico>
  );
}

function NavBar() {
  return (
    <div className="absolute bottom-[3px] left-[678px] h-[25px] w-[246px] bg-[#f0f0f0]">
      <Ico x={54} y={15} w={738} h={75}>
        <g stroke="#4b5158" strokeWidth="3.500">
          <ellipse cx="88" cy="54" rx="22" ry="9" />
          <path d="M87 28V76M91 28V76" strokeWidth="2.500" />
          <path d="M64 60L80 54V70Z" fill="#333" stroke="none" />
          <path d="M166 46H214V76H166ZM176 54H206V67H176ZM168 42L172 36H206M174 36L184 30V40" />
          <path d="M261 76L250 58Q246 52 252 52L260 58L257 38Q258 33 263 38L267 50L268 32Q272 27 275 32L276 50L281 34Q286 31 287 37L285 52L291 44Q297 43 294 50L286 70V76Z" fill="#fff" strokeWidth="2.500" />
          <circle cx="342" cy="48" r="14" fill="#dceef2" strokeWidth="3" />
          <path d="M352 58L366 72" strokeWidth="6" />
          <path d="M364 35H377M370 28V42M364 48H377" strokeWidth="2.500" />
          <path d="M410 28H458V76H410Z" strokeWidth="2" strokeDasharray="5 4" />
          <circle cx="431" cy="46" r="19" fill="#dceef2" strokeWidth="3" />
          <path d="M446 60L458 75" strokeWidth="7" />
          <path d="M512 30H562V67H512ZM526 74H550" />
          <path d="M519 37H555V60H519Z" fill="#a8c8ee" stroke="#4872a8" strokeWidth="2.500" />
          <path d="M610 29H656V76H610Z" fill="#fafafa" strokeWidth="2.500" />
          <path d="M618 29V76M626 29V76M634 29V76M642 29V76M650 29V76M610 37H656M610 45H656M610 53H656M610 61H656M610 69H656" strokeWidth="1.500" />
          <path d="M706 31H727V50H706ZM731 31H752V50H731ZM706 54H727V72H706ZM731 54H752V72H731Z" fill="#9dbde6" strokeWidth="2.500" stroke="#48638c" />
        </g>
        <path d="M130 47H146L138 58ZM476 47H492L484 58ZM570 47H586L578 58ZM667 47H683L675 58ZM763 47H779L771 58Z" fill="#333" />
      </Ico>
    </div>
  );
}

/* ---------- taskbar ---------- */

function Task({ x, children, under, active }: { x: number; children: React.ReactNode; under?: boolean; active?: boolean }) {
  return (
    <Ico x={x} y={114} w={115} h={96}>
      {active && <rect x={x + 1} y="114" width="113" height="96" fill="#4b4b4b" />}
      {children}
      {under && <rect x={active ? x + 1 : x + 14} y="203" width={active ? 113 : 88} height="7" fill="#bf76bd" />}
    </Ico>
  );
}

function Taskbar() {
  return (
    <div className="flex h-8 shrink-0 items-center bg-[#202020] text-white">
      <Ico x={0} y={114} w={395} h={96}>
        <path d="M30 145L52 142V162H30ZM55 141L80 138V162H55ZM30 165H52V186L30 183ZM55 165H80V190L55 186Z" fill="#fff" />
        <circle cx="175" cy="156" r="17" stroke="#fff" strokeWidth="3.500" />
        <path d="M163 168L143 188" stroke="#fff" strokeWidth="3.500" />
        <path d="M257 138V144H286V138M257 150H286V169H257ZM257 188V182H286V188M301 138V188" stroke="#e6e6e6" strokeWidth="3" />
        <path d="M257 174H286V180H257ZM297 152H305V159H297Z" fill="#eee" />
        <path d="M353 136V190M361 136V190" stroke="#565656" strokeWidth="3" />
      </Ico>
      <Task x={395} under>
        <circle cx="452" cy="163" r="25" fill="#1a7fd4" />
        <path d="M428 157Q432 138 452 138Q478 140 477 163Q474 174 460 171Q466 152 448 151Q434 150 428 157Z" fill="#35c98f" />
        <path d="M428 157Q436 138 455 139Q470 141 475 152Q455 142 442 150Z" fill="#2fb8e6" />
        <path d="M440 160Q438 182 462 186Q448 190 438 182Q424 170 440 160Z" fill="#0c4fa0" />
        <path d="M449 162Q450 178 474 174Q462 182 452 178Q444 172 449 162Z" fill="#1c2733" />
      </Task>
      <Task x={510} under>
        <path d="M543 144H560L565 149H591V186H543Z" fill="#f0a50a" />
        <path d="M545 153H591V184H545Z" fill="#ffd968" />
        <path d="M553 186V166H583V186H576V174H560V186Z" fill="#2f8fdd" />
      </Task>
      <Task x={625}>
        <defs>
          <linearGradient id="kt" x1="0" y1="0" x2="1" y2="1">
            <stop offset="0" stopColor="#1397a8" />
            <stop offset=".5" stopColor="#5a3a96" />
            <stop offset="1" stopColor="#c21a78" />
          </linearGradient>
        </defs>
        <path d="M657 138H708V188H657Z" fill="url(#kt)" />
        <path d="M669 152L680 158V168L669 174ZM697 152L686 158V168L697 174ZM678 158H688V167H678Z" fill="#fff" />
      </Task>
      <Task x={740}>
        <path d="M784 143L802 139V186L784 182Z" fill="#fff" />
        <path d="M803 142H812V158L805 178Z" fill="#ddd" />
        <path d="M787 178V184M806 144V160M809 143V156" stroke="#222" strokeWidth="2" />
      </Task>
      <Task x={855} under>
        <path d="M888 188L892 172A25 25 0 1 1 901 183Z" fill="#fff" />
        <circle cx="913" cy="162" r="20" fill="#2ac254" />
        <path d="M903 153Q907 147 910 152L912 157L909 160Q913 168 920 170L923 167L929 170Q928 177 920 176Q904 170 903 153Z" fill="#fff" />
      </Task>
      <Task x={970} under>
        <path d="M1002 138H1053V188H1002Z" fill="#fbdcc0" />
        <path d="M1016 145H1043V153H1027V161H1040V169H1027V182H1016Z" fill="#d9771f" />
        <path d="M1016 145L1027 153V182L1016 178Z" fill="#9c4e12" />
        <path d="M1036 178H1052V183H1036Z" fill="#e59b5a" />
      </Task>
      <Task x={1087} under active>
        <path d="M1140 138A22 22 0 0 0 1130 176L1138 168Q1130 155 1141 148ZM1148 138Q1164 144 1163 163L1150 174Q1158 158 1148 148Z" fill="#d8340e" />
        <path d="M1138 142L1146 138L1151 174L1142 176Z" fill="#c9ccd0" />
        <circle cx="1134" cy="178" r="6" stroke="#1f7fd4" strokeWidth="4" />
        <circle cx="1147" cy="183" r="6" stroke="#1f7fd4" strokeWidth="4" />
      </Task>
      <div className="ml-auto flex h-8 items-center">
        <Ico x={60} y={24} w={213} h={96}>
          <path d="M73 46V98M82 46V98" stroke="#565656" strokeWidth="3" />
          <circle cx="184" cy="72" r="35" fill="#22a366" stroke="#fff" strokeWidth="5" />
          <path d="M150 73H164L171 60L180 92L186 50L193 86L199 66L204 73H218" stroke="#fff" strokeWidth="5" />
        </Ico>
        <div className="flex h-[22px] w-[52px] border-2 border-white bg-black">
          <div className="flex w-[29px] justify-start overflow-visible bg-[#16a04b] pl-[9px] font-['Open_Sans'] text-[15px] leading-[16px] tracking-[-0.3px]">60%</div>
        </div>
        <Ico x={429} y={24} w={550} h={96}>
          <path d="M429 55H433V87H429Z" fill="#fff" />
          <path d="M465 50Q476 70 468 86L464 96L461 86Q448 76 465 50Z" fill="#fff" />
          <path d="M463 74L458 84" stroke="#222" strokeWidth="2" />
          <path d="M514 83L533 65L552 83" stroke="#eee" strokeWidth="3.500" />
          <path d="M585 72Q600 62 610 66Q622 72 632 62Q630 84 608 84Q598 84 596 76Z" fill="#e8e8e8" />
          <circle cx="608" cy="74" r="8" fill="#202020" stroke="#eee" strokeWidth="3" />
          <path d="M658 65H667L677 56V92L667 83H658Z" stroke="#eee" strokeWidth="3" />
          <path d="M683 68Q688 74 683 80" stroke="#eee" strokeWidth="3" />
          <path d="M690 62Q698 74 690 86M698 57Q710 74 698 91" stroke="#777" strokeWidth="3" />
          <path d="M746 62H778V87H744V76M781 70V80" stroke="#eee" strokeWidth="3" />
          <path d="M748 67H760V83H748ZM733 56H748V66L741 72L733 66ZM738 70H744V84H738Z" fill="#eee" />
          <path d="M822 56H857V84H818V74M838 84V91M828 92H850" stroke="#eee" strokeWidth="3" />
          <path d="M809 54L822 56L818 70L810 66Z" stroke="#eee" strokeWidth="3" />
          <path d="M912 70L928 52Q936 46 939 53Q942 60 932 68L912 90Q902 98 898 90Q896 82 906 76Q918 68 920 76Q922 84 914 92M926 74Q940 62 943 72Q942 82 928 78" stroke="#eee" strokeWidth="3.500" />
        </Ico>
        <div className="ml-[4px] w-[37px] pt-px font-['Open_Sans'] text-[13px] tracking-[-0.5px]">ENG</div>
        <div className="w-[64.400px] pt-px font-['Open_Sans'] text-[13px] tracking-[-0.5px] whitespace-nowrap">10:07 am</div>
        <Ico x={1295} y={24} w={145} h={96}>
          <path d="M1313 50H1362V88H1347L1338 97V88H1313Z" stroke="#eee" strokeWidth="3.500" />
          <path d="M1427 24V120" stroke="#666" strokeWidth="2" />
        </Ico>
      </div>
    </div>
  );
}

/* ---------- page ---------- */

export default function App() {
  return (
    <div className="relative flex h-[900px] w-[1600px] flex-col overflow-hidden bg-[#f1f1f1] font-['Liberation_Sans',sans-serif]">
      <div className="absolute top-0 left-[674px] flex h-px">
        <div className="w-[50px] bg-[#8e3f8c]" />
        <div className="w-[201px] bg-[#2b2b2b]" />
      </div>
      <Header />
      <Ribbon />
      <div className="relative grid h-[725px] shrink-0 grid-cols-[795px_800px] grid-rows-[360px_360px] gap-[5px] bg-[#cccccc]">
        <div className="overflow-hidden bg-white"><TopView /></div>
        <div className="overflow-hidden bg-white"><IsoView /></div>
        <div className="overflow-hidden bg-white"><FrontView /></div>
        <div className="overflow-hidden bg-white"><RightView /></div>
        <Browser />
        <div className="absolute bottom-[4px] left-[4px] flex h-[26px] w-[313px] items-center border border-[#d0d0d0] bg-[#f1f1f1] text-[12px] tracking-[-1.3px] text-[#777]">
          <span className="ml-[25px]">COMMENTS</span>
          <PanelEnd plus />
        </div>
        <NavBar />
      </div>
      <Taskbar />
    </div>
  );
}
